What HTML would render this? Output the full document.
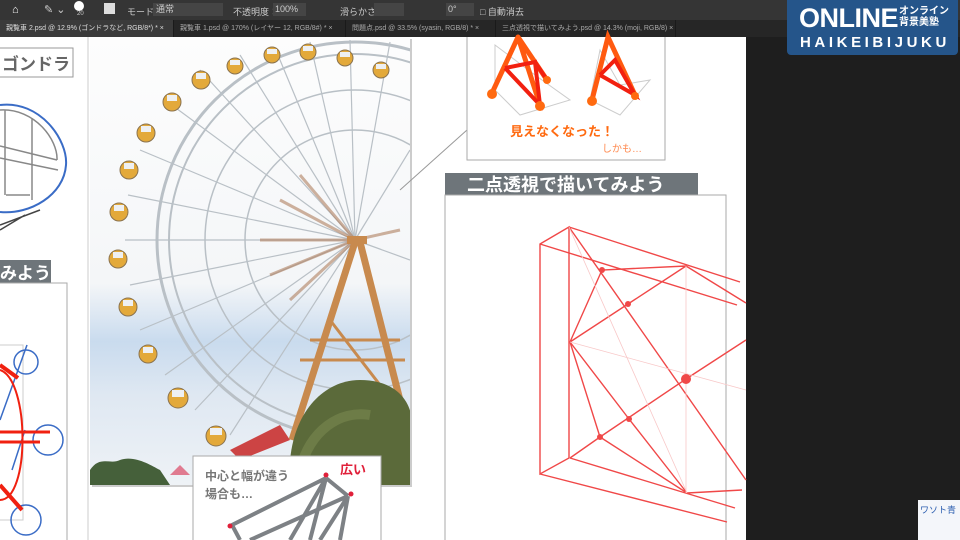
<!DOCTYPE html>
<html><head><meta charset="utf-8"><style>
*{margin:0;padding:0;box-sizing:border-box}
body{width:960px;height:540px;overflow:hidden;background:#1e1e1e;font-family:"Liberation Sans","Noto Sans CJK JP",sans-serif;position:relative}
.abs{position:absolute}
.tb{left:0;top:0;width:960px;height:20px;background:#353535;color:#ccc;font-size:9px}
.tabs{left:0;top:20px;width:960px;height:17px;background:#262626;color:#aaa;font-size:7px;white-space:nowrap}
.tab{position:absolute;top:0;height:17px;line-height:17px;padding-left:6px;border-right:1px solid #1a1a1a;overflow:hidden}
.canvas{left:0;top:37px;width:746px;height:503px;background:#fff}
</style></head><body>
<div class="abs tb">
 <span class="abs" style="left:12px;top:4px;color:#fff;font-size:11px">⌂</span>
 <span class="abs" style="left:44px;top:3px;font-size:11px">✎ ⌄</span>
 <span class="abs" style="left:74px;top:1px;width:10px;height:10px;border-radius:50%;background:#fff"></span>
 <span class="abs" style="left:77px;top:11px;font-size:6px">20</span>
 <span class="abs" style="left:104px;top:3px;width:11px;height:11px;background:#ddd"></span>
 <span class="abs" style="left:127px;top:5px">モード：</span>
 <span class="abs" style="left:153px;top:3px;width:70px;height:13px;background:#454545;padding-left:3px;line-height:13px">通常</span>
 <span class="abs" style="left:233px;top:5px">不透明度：</span>
 <span class="abs" style="left:273px;top:3px;width:33px;height:13px;background:#454545;line-height:13px;padding-left:2px">100%</span>
 <span class="abs" style="left:340px;top:5px">滑らかさ：</span>
 <span class="abs" style="left:374px;top:3px;width:30px;height:13px;background:#454545"></span>
 <span class="abs" style="left:446px;top:3px;width:28px;height:13px;background:#454545;line-height:13px;padding-left:2px">0°</span>
 <span class="abs" style="left:480px;top:5px">□ 自動消去</span>
</div>
<div class="abs tabs">
 <div class="tab" style="left:0;width:174px;background:#3a3a3a;color:#ddd">親覧車 2.psd @ 12.9% (ゴンドラなど, RGB/8*) * ×</div>
 <div class="tab" style="left:174px;width:172px">親覧車 1.psd @ 170% (レイヤー 12, RGB/8#) * ×</div>
 <div class="tab" style="left:346px;width:150px">問題点.psd @ 33.5% (syasin, RGB/8) * ×</div>
 <div class="tab" style="left:496px;width:180px">三点透視で描いてみよう.psd @ 14.3% (moji, RGB/8) ×</div>
</div>
<div class="abs canvas"></div>
<svg class="abs" style="left:0;top:0" width="960" height="540">
 <defs>
  <linearGradient id="sky" x1="0" y1="0" x2="0" y2="1">
   <stop offset="0" stop-color="#fdfdfd"/><stop offset="0.55" stop-color="#f4f6f8"/><stop offset="0.68" stop-color="#c9dbee"/><stop offset="0.8" stop-color="#dfe8f2"/><stop offset="1" stop-color="#eef2f6"/>
  </linearGradient>
  <clipPath id="pc"><rect x="90" y="37" width="320" height="448"/></clipPath>
 </defs>
 <line x1="88" y1="37" x2="88" y2="540" stroke="#ccc"/>
 <rect x="-2" y="48" width="75" height="29" fill="#fff" stroke="#999"/>
 <text x="2" y="70" font-size="17" font-weight="bold" fill="#666" font-family="Liberation Sans,Noto Sans CJK JP,sans-serif">ゴンドラ</text>
 <path d="M0 105 C40 100 68 140 66 165 C64 195 30 215 0 212" fill="none" stroke="#3a6cc6" stroke-width="2"/>
 <path d="M0 110 C35 108 58 140 57 160 M5 110 V195 M32 118 V200 M0 158 L58 170 M0 146 L57 160 M6 195 H30" fill="none" stroke="#888" stroke-width="1.5"/>
 <path d="M0 225 L40 210 M0 230 L25 215" stroke="#444" stroke-width="1.5"/>
 <rect x="0" y="260" width="51" height="23" fill="#6e757a"/>
 <text x="0" y="279" font-size="17" font-weight="bold" fill="#fff" font-family="Liberation Sans,Noto Sans CJK JP,sans-serif">みよう</text>
 <rect x="-2" y="283" width="69" height="260" fill="#fff" stroke="#aaa"/>
 <rect x="-2" y="345" width="25" height="175" fill="none" stroke="#ccc"/>
 <g fill="none" stroke="#3a6cc6" stroke-width="1.5">
  <circle cx="26" cy="362" r="12"/><circle cx="48" cy="440" r="15"/><circle cx="26" cy="520" r="15"/>
  <line x1="27" y1="345" x2="0" y2="420"/><line x1="25" y1="430" x2="12" y2="470"/>
 </g>
 <g stroke="#f02010" fill="none">
  <path d="M0 370 C30 380 30 500 0 500" stroke-width="2"/>
  <line x1="0" y1="432" x2="50" y2="432" stroke-width="3"/><line x1="0" y1="442" x2="40" y2="442" stroke-width="3"/>
  <line x1="0" y1="365" x2="18" y2="378" stroke-width="4"/><line x1="0" y1="485" x2="22" y2="510" stroke-width="4"/>
 </g>
 <rect x="92" y="39" width="320" height="448" fill="#ccc"/>
 <g clip-path="url(#pc)">
  <rect x="90" y="37" width="320" height="448" fill="url(#sky)"/>
  <g fill="none" stroke="#b9c0c6">
   <circle cx="355" cy="240" r="198" stroke-width="3"/>
   <circle cx="355" cy="240" r="186" stroke-width="2"/>
   <circle cx="355" cy="240" r="150" stroke-width="1.5"/>
   <circle cx="355" cy="240" r="110" stroke-width="1.5"/>
   <g stroke-width="1.2">
    <line x1="355" y1="240" x2="125" y2="240"/><line x1="355" y1="240" x2="128" y2="195"/><line x1="355" y1="240" x2="140" y2="150"/>
    <line x1="355" y1="240" x2="165" y2="100"/><line x1="355" y1="240" x2="200" y2="70"/><line x1="355" y1="240" x2="240" y2="55"/>
    <line x1="355" y1="240" x2="275" y2="48"/><line x1="355" y1="240" x2="310" y2="42"/><line x1="355" y1="240" x2="350" y2="40"/>
    <line x1="355" y1="240" x2="390" y2="42"/><line x1="355" y1="240" x2="130" y2="285"/><line x1="355" y1="240" x2="140" y2="330"/>
    <line x1="355" y1="240" x2="165" y2="375"/><line x1="355" y1="240" x2="195" y2="410"/><line x1="355" y1="240" x2="230" y2="435"/>
    <line x1="355" y1="240" x2="410" y2="150"/><line x1="355" y1="240" x2="410" y2="260"/>
   </g>
  </g>
  <g stroke="#b08060" stroke-width="3" opacity="0.6">
   <line x1="355" y1="240" x2="260" y2="240"/><line x1="355" y1="240" x2="280" y2="200"/><line x1="355" y1="240" x2="300" y2="175"/>
   <line x1="355" y1="240" x2="270" y2="275"/><line x1="355" y1="240" x2="290" y2="300"/><line x1="355" y1="240" x2="400" y2="230"/>
  </g>
  <g stroke="#c88a4e" stroke-width="7">
   <line x1="355" y1="242" x2="292" y2="440"/><line x1="360" y1="242" x2="405" y2="420"/>
  </g>
  <g stroke="#c88a4e" stroke-width="3">
   <line x1="310" y1="340" x2="400" y2="340"/><line x1="300" y1="360" x2="405" y2="360"/><line x1="330" y1="320" x2="380" y2="385"/>
  </g>
  <rect x="347" y="236" width="20" height="8" fill="#c88a4e"/>
  <g fill="#e3a93a" stroke="#8a7350" stroke-width="1">
   <circle cx="235" cy="66" r="8"/><circle cx="272" cy="55" r="8"/><circle cx="308" cy="52" r="8"/><circle cx="345" cy="58" r="8"/><circle cx="381" cy="70" r="8"/>
   <circle cx="201" cy="80" r="9"/><circle cx="172" cy="102" r="9"/><circle cx="146" cy="133" r="9"/><circle cx="129" cy="170" r="9"/>
   <circle cx="119" cy="212" r="9"/><circle cx="118" cy="259" r="9"/><circle cx="128" cy="307" r="9"/><circle cx="148" cy="354" r="9"/>
   <circle cx="178" cy="398" r="10"/><circle cx="216" cy="436" r="10"/>
  </g>
  <g fill="#eef0f2">
   <rect x="230" y="60" width="10" height="5"/><rect x="267" y="49" width="10" height="5"/><rect x="303" y="46" width="10" height="5"/><rect x="340" y="52" width="10" height="5"/><rect x="376" y="64" width="10" height="5"/>
   <rect x="196" y="73" width="10" height="6"/><rect x="167" y="95" width="10" height="6"/><rect x="141" y="126" width="10" height="6"/><rect x="124" y="163" width="10" height="6"/>
   <rect x="114" y="205" width="10" height="6"/><rect x="113" y="252" width="10" height="6"/><rect x="123" y="300" width="10" height="6"/><rect x="143" y="347" width="10" height="6"/>
   <rect x="172" y="390" width="12" height="7"/><rect x="210" y="428" width="12" height="7"/>
  </g>
  <path d="M290 485 C285 420 320 380 360 380 C395 380 410 400 412 420 V485Z" fill="#5b6a3a"/>
  <path d="M300 470 C310 430 340 410 370 415" fill="none" stroke="#7a8850" stroke-width="10" opacity="0.6"/>
  <path d="M90 485 V470 C100 455 110 465 120 460 C135 455 150 465 160 470 L170 485Z" fill="#45603a"/>
  <path d="M170 475 L180 465 L190 475Z" fill="#e07a90"/>
  <path d="M230 450 L280 425 L290 440 L240 460Z" fill="#c44"/>
 </g>
 <rect x="193" y="456" width="188" height="90" fill="#fff" stroke="#aaa"/>
 <text x="205" y="480" font-size="12" font-weight="bold" fill="#777" font-family="Liberation Sans,Noto Sans CJK JP,sans-serif">中心と幅が違う</text>
 <text x="205" y="498" font-size="12" font-weight="bold" fill="#777" font-family="Liberation Sans,Noto Sans CJK JP,sans-serif">場合も…</text>
 <text x="340" y="474" font-size="13" font-weight="bold" fill="#e0203a" font-family="Liberation Sans,Noto Sans CJK JP,sans-serif">広い</text>
 <g stroke="#7d8185" stroke-width="4" fill="none">
  <path d="M326 478 L348 496 M326 478 L232 525 L240 540 M348 496 L250 540 M326 478 L290 540 M326 478 L310 540 M348 496 L320 540 M348 496 L340 540"/>
 </g>
 <circle cx="326" cy="475" r="2.5" fill="#e0203a"/><circle cx="351" cy="494" r="2.5" fill="#e0203a"/><circle cx="230" cy="526" r="2.5" fill="#e0203a"/>
 <path d="M400 190 L467 130" stroke="#999"/>
 <path d="M467 37 V160 H665 V37" fill="#fff" stroke="#aaa"/>
 <g fill="none" stroke="#ccc"><path d="M495 45 L535 75 L570 100 L520 115 L495 90Z M600 50 L620 85 L650 80 L620 115 L590 100Z"/></g>
 <g stroke="#ff5a10" stroke-width="5" fill="none" stroke-linecap="round">
  <path d="M492 93 L518 37 M518 37 L540 105 M518 37 L547 80"/><path d="M592 100 L608 37 L635 95"/>
 </g>
 <g stroke="#f22010" stroke-width="4" fill="none">
  <path d="M505 68 L535 62 L540 105 L505 68 M535 62 L547 80"/><path d="M600 75 L615 60 L635 95 L600 75"/>
 </g>
 <g fill="#ff6a10"><circle cx="492" cy="94" r="5"/><circle cx="540" cy="106" r="5"/><circle cx="547" cy="80" r="4"/><circle cx="592" cy="101" r="5"/><circle cx="635" cy="96" r="4"/></g>
 <text x="510" y="136" font-size="13" font-weight="bold" fill="#ff6a10" font-family="Liberation Sans,Noto Sans CJK JP,sans-serif">見えなくなった！</text>
 <text x="602" y="152" font-size="10" fill="#ff8a50" font-family="Liberation Sans,Noto Sans CJK JP,sans-serif">しかも…</text>
 <rect x="445" y="173" width="253" height="22" fill="#6e757a"/>
 <text x="467" y="191" font-size="18" font-weight="bold" fill="#fff" font-family="Liberation Sans,Noto Sans CJK JP,sans-serif">二点透視で描いてみよう</text>
 <rect x="445" y="195" width="281" height="350" fill="#fff" stroke="#aaa"/>
 <g stroke="#f04848" stroke-width="1.4" fill="none">
  <path d="M540 244 L569 227 L569 458 L540 474Z M569 227 L740 282 M540 244 L737 305 M540 474 L727 522 M570 458 L735 508"/>
  <path d="M569 227 L746 480 M570 342 L602 270 L686 266 L746 303 M570 342 L686 266 M570 342 L600 437 L687 493 M570 342 L629 419 L687 493 M600 437 L686 379 L746 340 M570 458 L600 437 M687 493 L742 490"/>
 </g>
 <g stroke="#f8c8c8" stroke-width="0.8"><path d="M570 342 L746 390 M569 227 L687 493 M686 266 L686 493"/></g>
 <g fill="#f04848"><circle cx="602" cy="270" r="3"/><circle cx="628" cy="304" r="3"/><circle cx="686" cy="379" r="5"/><circle cx="629" cy="419" r="3"/><circle cx="600" cy="437" r="3"/></g>
 <rect x="918" y="500" width="42" height="40" fill="#f4f6fa"/>
 <text x="920" y="513" font-size="9" fill="#2d5fb0" font-family="Liberation Sans,Noto Sans CJK JP,sans-serif">ワソト青</text>
</svg>
<div class="abs" style="left:787px;top:0;width:171px;height:55px;background:#25558a;border-radius:0 0 4px 4px;color:#fff">
 <div class="abs" style="left:12px;top:3px;font-size:27px;font-weight:bold;letter-spacing:-0.5px">ONLINE</div>
 <div class="abs" style="left:112px;top:6px;font-size:10px;font-weight:bold;line-height:11px">オンライン<br>背景美塾</div>
 <div class="abs" style="left:13px;top:34px;font-size:15px;font-weight:bold;letter-spacing:3.6px">HAIKEIBIJUKU</div>
</div>
</body></html>
